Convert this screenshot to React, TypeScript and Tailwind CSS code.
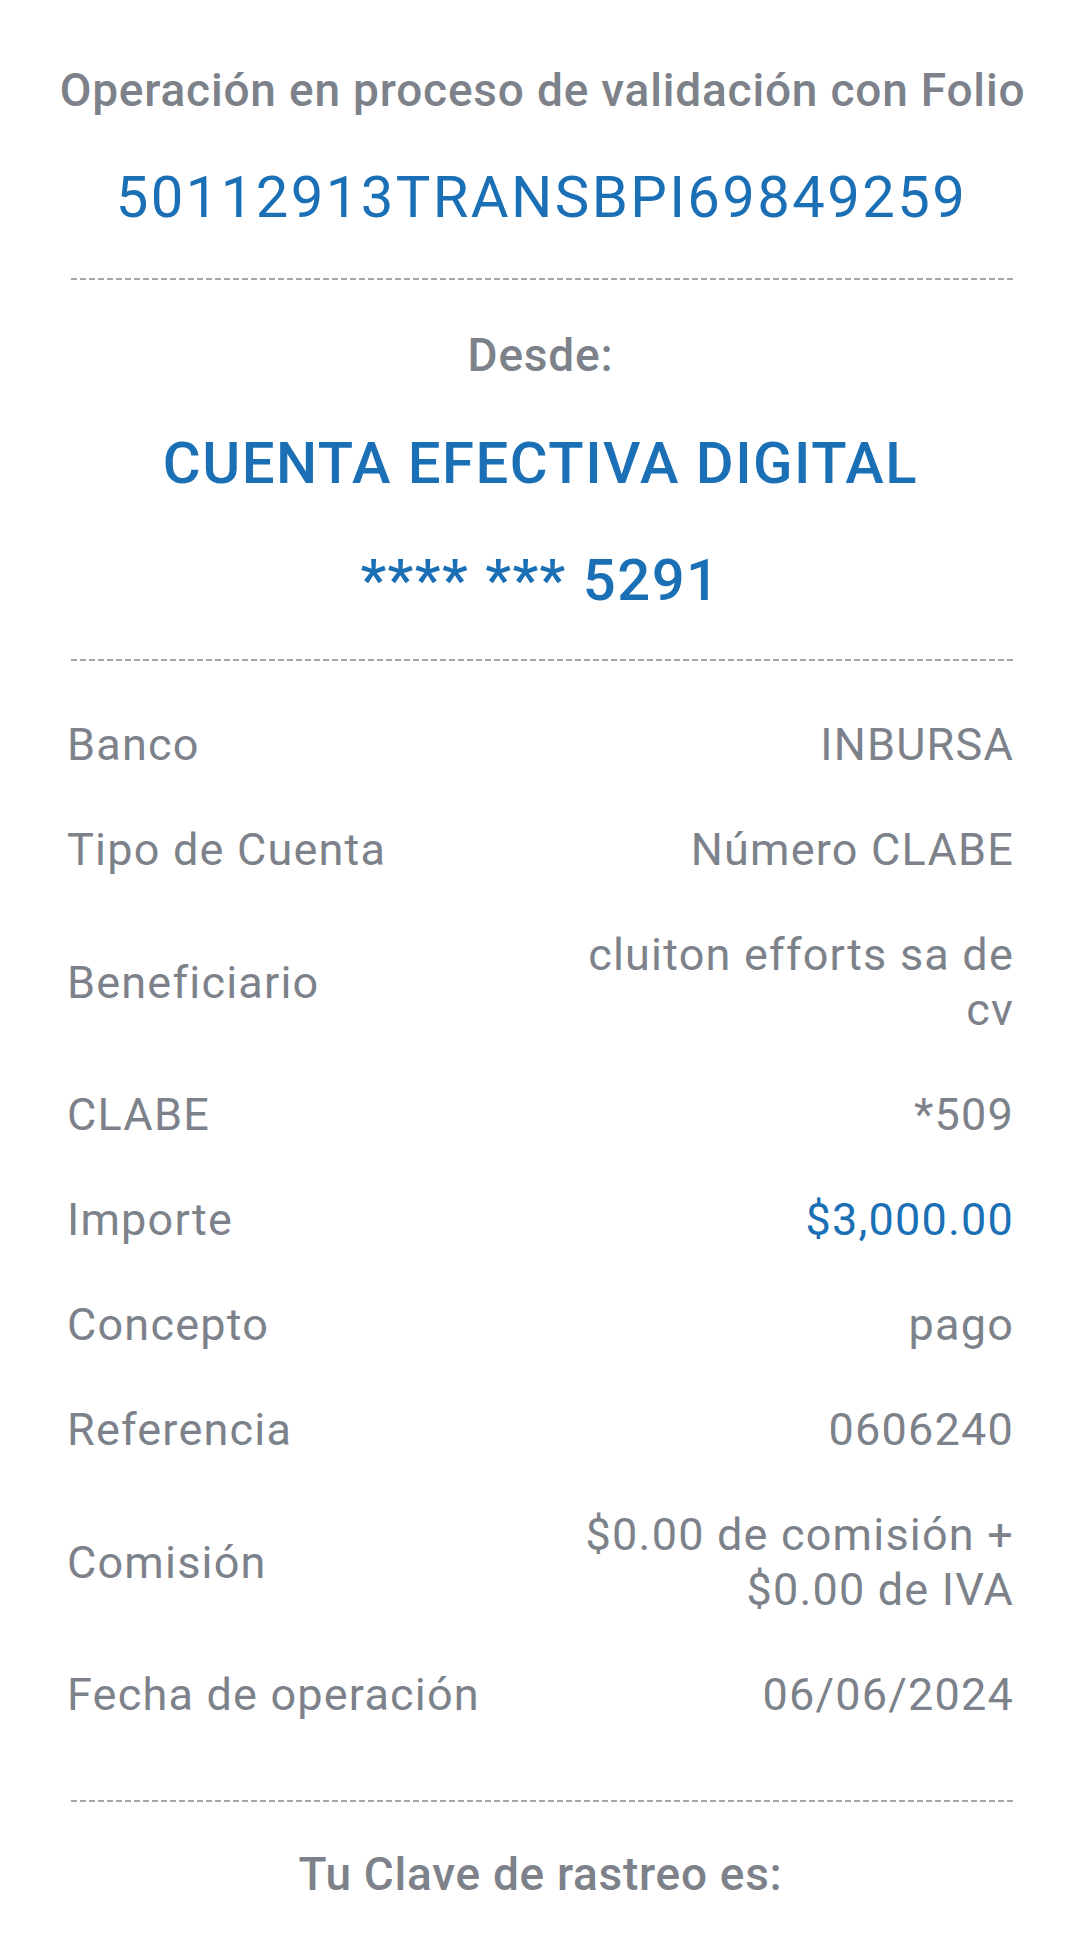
const rows: { label: string; value: string[]; accent?: boolean }[] = [
  { label: 'Banco', value: ['INBURSA'] },
  { label: 'Tipo de Cuenta', value: ['Número CLABE'] },
  { label: 'Beneficiario', value: ['cluiton efforts sa de', 'cv'] },
  { label: 'CLABE', value: ['*509'] },
  { label: 'Importe', value: ['$3,000.00'], accent: true },
  { label: 'Concepto', value: ['pago'] },
  { label: 'Referencia', value: ['0606240'] },
  { label: 'Comisión', value: ['$0.00 de comisión +', '$0.00 de IVA'] },
  { label: 'Fecha de operación', value: ['06/06/2024'] },
]

function Divider({ className = '' }: { className?: string }) {
  return (
    <div
      className={`h-[2px] ml-[4px] mr-[-1px] bg-[linear-gradient(to_right,#a3a6ab_72%,transparent_72%)] bg-[length:9px_2px] bg-repeat-x ${className}`}
    />
  )
}

export default function App() {
  return (
    <main className="min-h-[1952px] w-[1080px] bg-white font-['Roboto',sans-serif] text-[#7d828a]">
      <section className="pl-[67px] pr-[66px] flex flex-col">
        <h1 className="-mx-[40px] mt-[62px] pl-[4px] whitespace-nowrap text-center text-[46px] leading-[56px] font-medium tracking-[0.8px]">
          Operación en proceso de validación con Folio
        </h1>
        <p className="mt-[43px] pl-[2px] text-center text-[58px] leading-[72px] tracking-[2.4px] text-[#1a6fb5]">
          50112913TRANSBPI69849259
        </p>

        <Divider className="mt-[45px]" />

        <p className="mt-[47px] text-center text-[46px] leading-[56px] font-medium tracking-[0.8px]">Desde:</p>
        <p className="mt-[44px] text-center text-[58px] leading-[72px] font-medium tracking-[1.5px] text-[#1a6fb5]">
          CUENTA EFECTIVA DIGITAL
        </p>
        <p className="mt-[45px] text-center text-[58px] leading-[72px] font-medium tracking-[1.5px] text-[#1a6fb5]">
          **** *** 5291
        </p>

        <Divider className="mt-[43px]" />

        <dl className="mt-[31px] flex flex-col">
          {rows.map((r) => (
            <div
              key={r.label}
              className="flex items-center justify-between py-[25px] text-[45px] leading-[55px] tracking-[1.2px]"
            >
              <dt>{r.label}</dt>
              <dd className={`text-right ${r.accent ? 'text-[#1a6fb5]' : ''}`}>
                {r.value.map((v) => (
                  <div key={v}>{v}</div>
                ))}
              </dd>
            </div>
          ))}
        </dl>

        <Divider className="mt-[53px]" />

        <p className="mt-[44px] text-center text-[46px] leading-[56px] font-medium tracking-[0.7px]">
          Tu Clave de rastreo es:
        </p>
      </section>
    </main>
  )
}
